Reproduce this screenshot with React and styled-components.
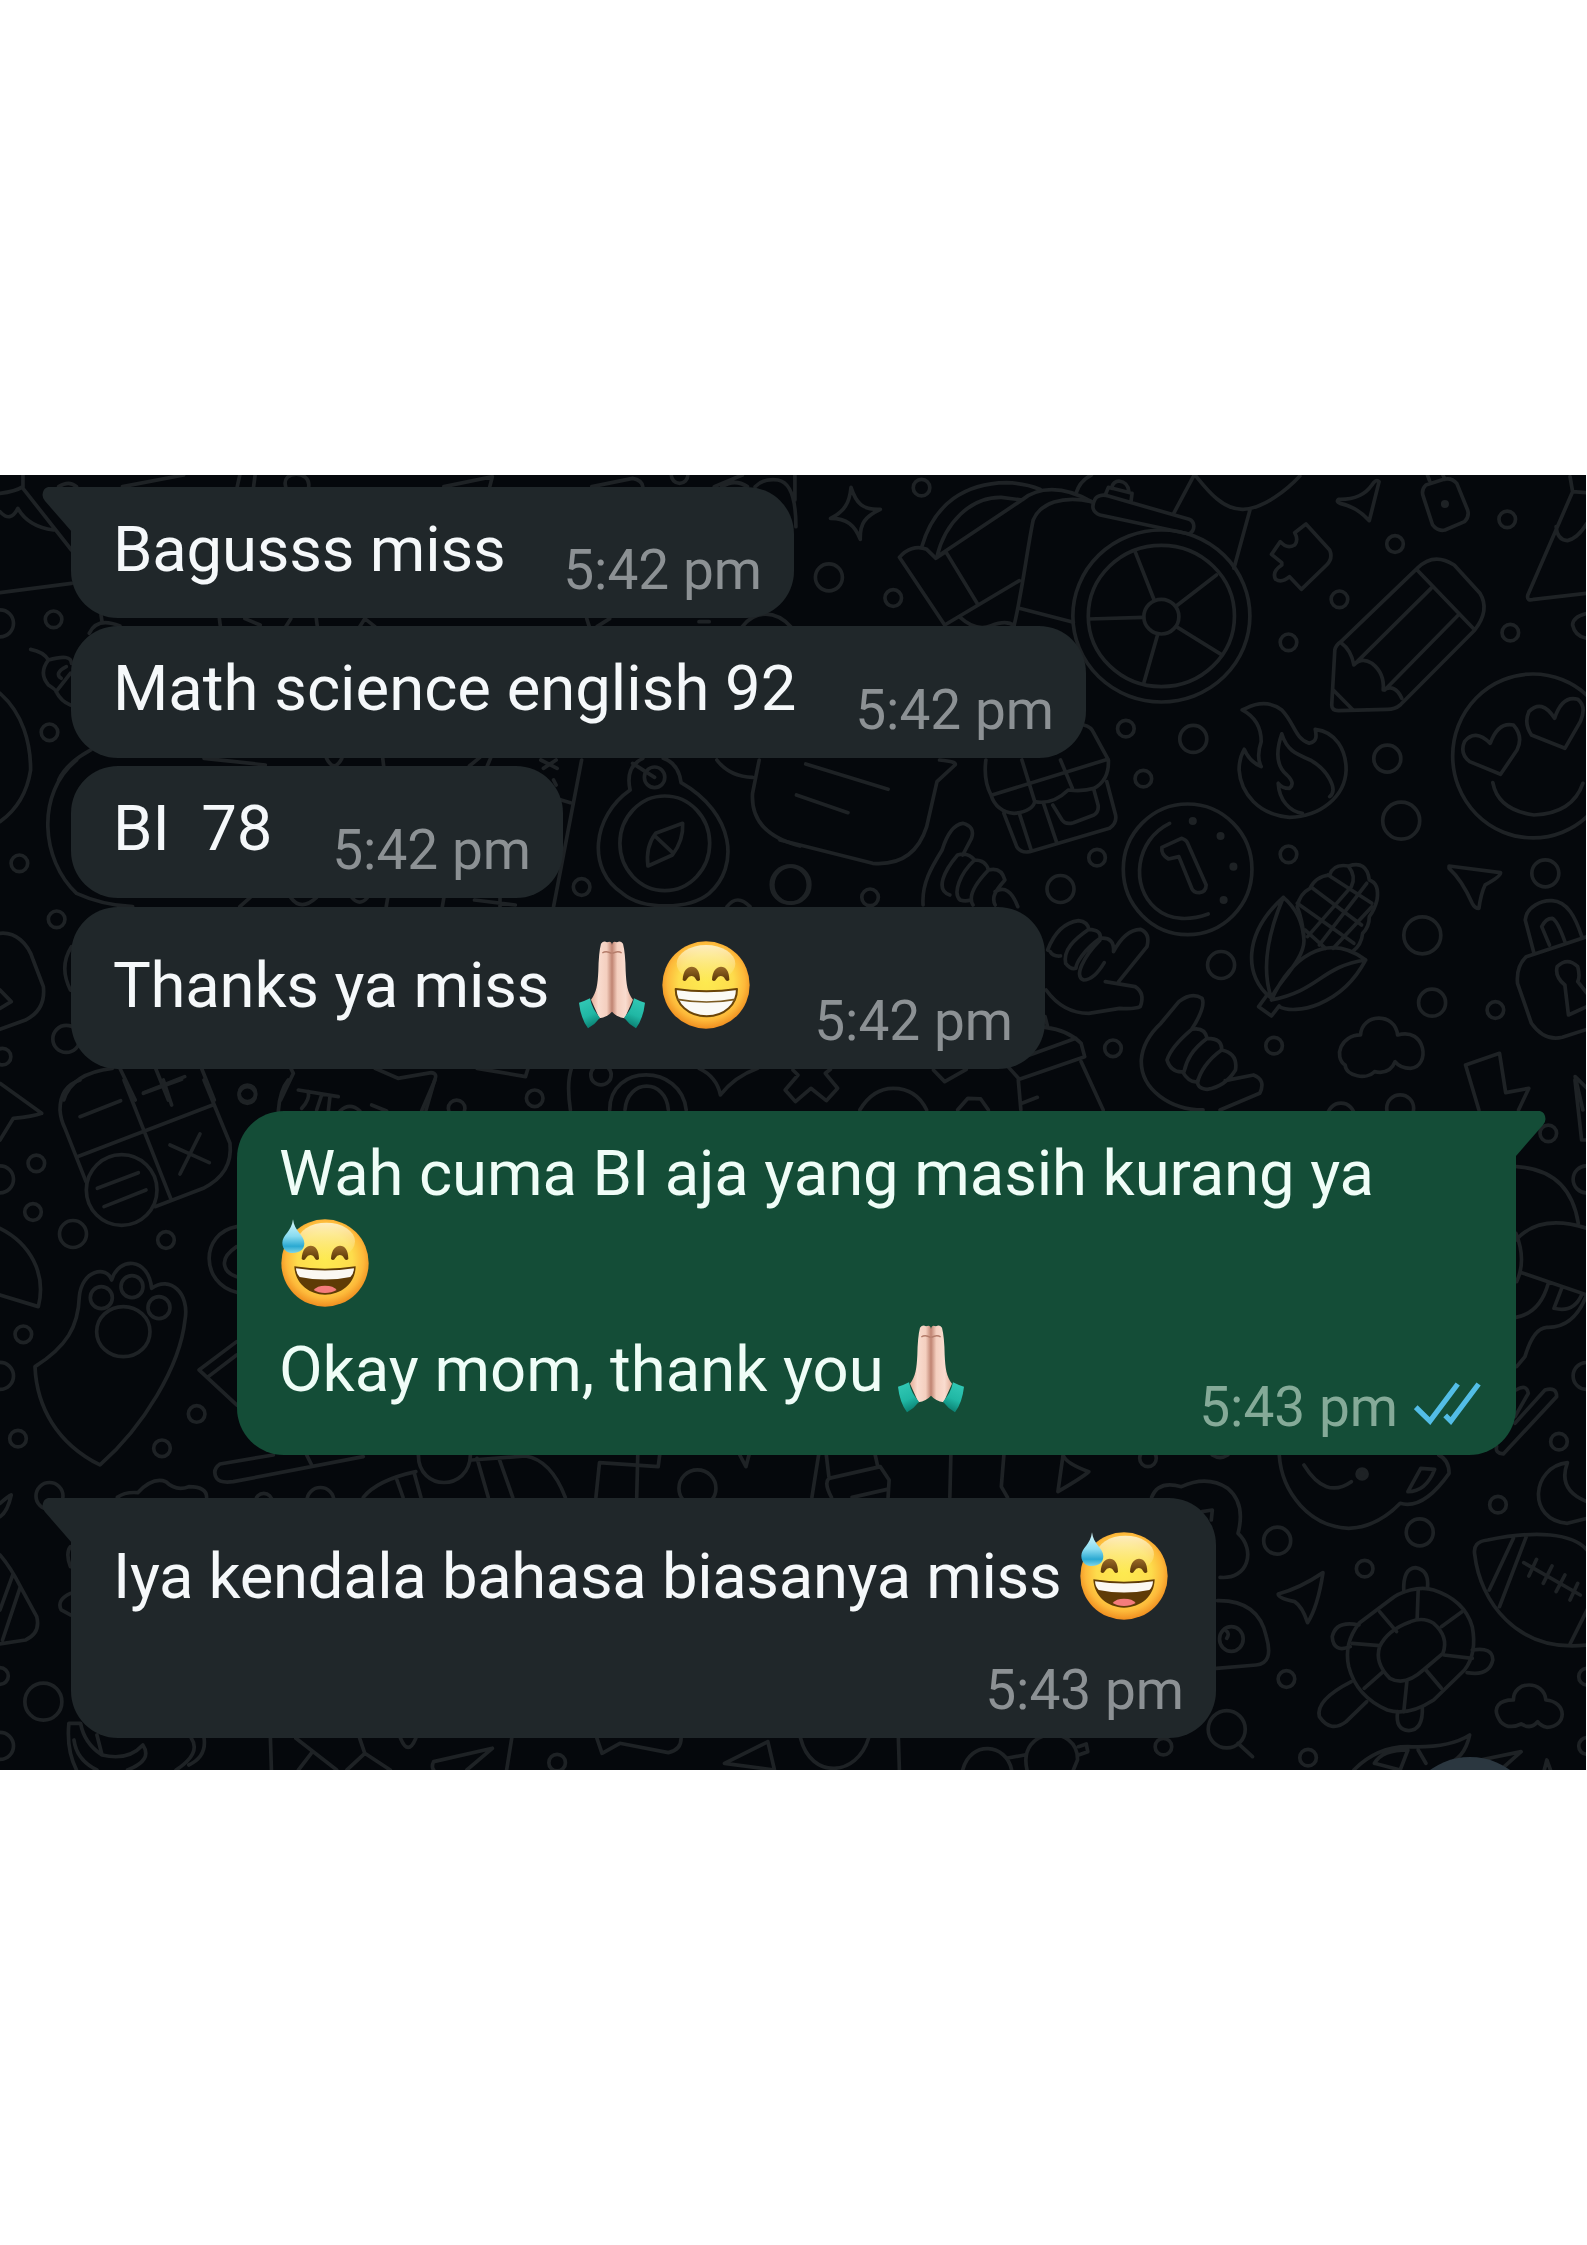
import React from "react";
import styled, { createGlobalStyle } from "styled-components";

const GlobalStyle = createGlobalStyle`
  html, body { margin: 0; padding: 0; background: #ffffff; }
`;

const Page = styled.main`
  box-sizing: border-box;
  width: 1587px;
  height: 2245px;
  padding-top: 475px;
  background: #ffffff;
  overflow: hidden;
  font-family: Roboto, "Liberation Sans", sans-serif;
`;

const ChatPanel = styled.section`
  position: relative;
  display: flex;
  flex-direction: column;
  align-items: flex-start;
  box-sizing: border-box;
  width: 1586px;
  height: 1295px;
  padding: 12px 70px 0 71px;
  background: #05080c;
  overflow: hidden;
`;

const Wallpaper = styled.svg`
  position: absolute;
  inset: 0;
  width: 1586px;
  height: 1295px;
  fill: none;
  stroke: #1e2225;
  stroke-width: 3.7px;
  stroke-linecap: round;
  stroke-linejoin: round;

  * { vector-effect: non-scaling-stroke; }
`;

const Bubble = styled.article`
  position: relative;
  display: grid;
  flex: none;
  box-sizing: border-box;
  width: ${(p) => p.$width}px;
  height: ${(p) => p.$height}px;
  margin-top: ${(p) => p.$gap || 0}px;
  align-self: ${(p) => (p.$sent ? "flex-end" : "flex-start")};
  padding: 25px ${(p) => (p.$sent ? 35 : 32)}px 18px 42px;
  border-radius: 47px;
  border-top-left-radius: ${(p) => (p.$tail && !p.$sent ? 0 : 47)}px;
  border-top-right-radius: ${(p) => (p.$tail && p.$sent ? 0 : 47)}px;
  background: ${(p) => (p.$sent ? "#144d37" : "#20272a")};
  color: ${(p) => (p.$sent ? "#effdf7" : "#f5f8fa")};
`;

const TailShape = styled.svg`
  position: absolute;
  top: 0;
  width: 30px;
  height: 45px;
  ${(p) => (p.$sent ? "left: calc(100% - 0.5px);" : "right: calc(100% - 0.5px); transform: scaleX(-1);")}
  fill: ${(p) => (p.$sent ? "#144d37" : "#20272a")};
`;

const Body = styled.div`
  grid-area: 1 / 1;
  align-self: start;
  display: flex;
  flex-direction: column;
`;

const Line = styled.div`
  display: flex;
  align-items: center;
  height: ${(p) => (p.$tall ? 105.6 : 74.6)}px;
  font-size: 63.4px;
  letter-spacing: ${(p) => p.$tracking || 0}px;
  line-height: 74px;
  white-space: pre;
`;

const EmojiIcon = styled.svg`
  flex: none;
  width: 88px;
  height: 88px;
  margin: 0 3px;
  margin-left: ${(p) => (p.$lead ? 2 : 3)}px;
`;

const Meta = styled.div`
  grid-area: 1 / 1;
  place-self: end;
  display: flex;
  align-items: center;
  gap: 16px;
  color: ${(p) => (p.$sent ? "#85aa98" : "#8c9194")};
`;

const Time = styled.time`
  font-size: 55px;
  line-height: 60px;
  white-space: pre;
`;

const TickIcon = styled.svg`
  width: 67px;
  height: 43px;
  margin-bottom: 8px;
  fill: none;
  stroke: #53bde6;
  stroke-width: 16;
`;

const Defs = () => (
  <defs>
    <radialGradient id="face" cx="0.5" cy="0.46" r="0.54">
      <stop offset="0" stopColor="#fdea50" />
      <stop offset="0.58" stopColor="#fddc4c" />
      <stop offset="0.82" stopColor="#fdb93a" />
      <stop offset="1" stopColor="#ef8e20" />
    </radialGradient>
    <linearGradient id="shine" x1="0" y1="0" x2="0" y2="1">
      <stop offset="0" stopColor="#fdf3cf" stopOpacity="0.9" />
      <stop offset="1" stopColor="#fdf3a0" stopOpacity="0" />
    </linearGradient>
    <linearGradient id="drop" x1="0" y1="0" x2="0" y2="1">
      <stop offset="0" stopColor="#d9f8fb" />
      <stop offset="0.5" stopColor="#8adcf0" />
      <stop offset="0.8" stopColor="#2aa9d2" />
      <stop offset="1" stopColor="#7fd6e6" />
    </linearGradient>
    <linearGradient id="palm" x1="0" y1="0" x2="1" y2="0">
      <stop offset="0" stopColor="#e2ac96" />
      <stop offset="0.35" stopColor="#f9dccf" />
      <stop offset="0.75" stopColor="#f4cfbf" />
      <stop offset="1" stopColor="#c08472" />
    </linearGradient>
    <linearGradient id="cuff" x1="0" y1="0" x2="0.3" y2="1">
      <stop offset="0" stopColor="#35cbb8" />
      <stop offset="0.65" stopColor="#20b7a4" />
      <stop offset="1" stopColor="#0d8778" />
    </linearGradient>
    <linearGradient id="brow" x1="0" y1="0" x2="0" y2="1">
      <stop offset="0" stopColor="#9a6b28" />
      <stop offset="1" stopColor="#5a3606" />
    </linearGradient>
  </defs>
);

const EYE =
  "M368 177 C369 148 383 137 395 137 C409 137 420 149 420 177 Q412 184 407 174 Q403 165 394 165 Q386 165 381 174 Q376 184 368 177Z";

const GrinFace = () => (
  <EmojiIcon viewBox="306 60 264 264" role="img" aria-label="beaming face">
    <Defs />
    <circle cx="438" cy="192" r="131" fill="url(#face)" />
    <ellipse cx="438" cy="128" rx="88" ry="56" fill="url(#shine)" />
    <path d={EYE} fill="url(#brow)" />
    <path d={EYE} fill="url(#brow)" transform="translate(88 0)" />
    <path
      d="M347 204 Q440 218 531 204 C531 250 495 285 440 286 C385 285 347 250 347 204Z"
      fill="#fbfaf5"
      stroke="#6a4408"
      strokeWidth="6"
      strokeLinejoin="round"
    />
    <path d="M352 235 Q440 251 526 235" fill="none" stroke="#7b5a20" strokeWidth="5" />
  </EmojiIcon>
);

const SweatFace = ({ lead }) => (
  <EmojiIcon $lead={lead} viewBox="62 57 264 264" role="img" aria-label="grinning face with sweat">
    <Defs />
    <circle cx="194" cy="189" r="131" fill="url(#face)" />
    <ellipse cx="198" cy="124" rx="86" ry="56" fill="url(#shine)" />
    <path d={EYE} fill="url(#brow)" transform="translate(-244 0)" />
    <path d={EYE} fill="url(#brow)" transform="translate(-156 0)" />
    <path d="M102 199 Q194 213 286 199 C285 250 245 283 194 284 C145 283 104 250 102 199Z" fill="#5f3b06" />
    <path d="M107 205 Q194 218 281 205 Q280 223 270 231 Q194 246 118 231 Q108 222 107 205Z" fill="#fbf8f2" />
    <path d="M160 270 Q170 257 194 257 Q220 257 229 270 Q214 279 194 279 Q174 279 160 270Z" fill="#f47c7c" />
    <path
      d="M98 58 C102 95 132 105 132 130 C132 150 117 159 98 159 C80 159 66 149 66 128 C66 105 94 95 98 58Z"
      fill="url(#drop)"
    />
  </EmojiIcon>
);

const PALM =
  "M123 68 Q131 57 141 64 Q154 58 156 72 L156 272 Q142 288 118 292 L93 236 C110 215 113 190 115 150 Q116 95 123 68Z";
const CUFF = "M57 245 Q75 240 90 232 Q97 266 120 290 Q105 310 84 322 Q62 292 57 245Z";

const Hand = () => (
  <>
    <path d={PALM} fill="url(#palm)" />
    <path d="M127 96 Q138 88 155 97" fill="none" stroke="#b47c6a" strokeWidth="4" />
    <path d={CUFF} fill="url(#cuff)" />
  </>
);

const PrayHands = () => (
  <EmojiIcon viewBox="24 60 264 264" role="img" aria-label="folded hands">
    <Defs />
    <Hand />
    <g transform="translate(312 0) scale(-1 1)">
      <Hand />
    </g>
  </EmojiIcon>
);

const Ticks = () => (
  <TickIcon viewBox="698 905 202 130" aria-label="read">
    <path d="M703 981 L746 1023 L830 911" />
    <path d="M792 1006 L809 1023 L893 911" />
  </TickIcon>
);

const Tail = ({ sent }) => (
  <TailShape $sent={sent} viewBox="0 0 30 45" aria-hidden="true">
    <path d="M0 0 H24 Q29 1 29.5 8 Q29.5 11 27 14 L0 45Z" />
  </TailShape>
);

const Message = ({ width, height, gap, sent, tail, time, children }) => (
  <Bubble $width={width} $height={height} $gap={gap} $sent={sent} $tail={tail}>
    {tail && <Tail sent={sent} />}
    <Body>{children}</Body>
    <Meta $sent={sent}>
      <Time>{time}</Time>
      {sent && <Ticks />}
    </Meta>
  </Bubble>
);

// Each wallpaper tile keeps its own origin and scale: s/m/l are small, medium
// and large rings, "solid" and "spot" are filled specks.
const R = { s: 8.3, m: 13.5, l: 18.5, solid: 2.2, spot: 5 };
const FILLED = ["solid", "spot"];

const TILES = [
  {
    x: 0, y: -15, sx: 0.5102, sy: 0.3333,
    rings: { s: [[1332, 45], [105, 478], [97, 817]], m: [[0, 490]] },
    paths: [
      "M45 45 L45 85 L140 270 M0 100 Q30 95 45 80 M0 155 Q20 190 35 145 Q55 200 105 210 M115 80 Q135 60 150 80",
      "M240 80 L360 45 M465 80 L470 45 M497 80 L500 45 M560 80 C550 30 610 30 605 80",
      "M870 80 L965 50 L960 80 M1160 80 L1240 55 Q1258 60 1260 80 M1400 80 L1455 45 M1415 80 Q1440 55 1465 80",
      "M1480 80 Q1495 55 1525 60 Q1560 70 1560 200 M1558 45 L1558 120 M0 398 L140 370",
      "M60 568 Q85 575 95 600 Q140 580 140 610 M95 600 Q75 640 95 675 Q110 690 110 695 L138 640 M130 620 Q105 640 120 655 M110 695 Q120 725 138 735",
      "M0 700 C45 760 60 850 60 930 Q50 1030 0 1085 M178 870 Q130 910 115 960",
      "M430 476 L432 500 M480 476 L510 495 M560 500 L570 476 M620 476 L622 500 M705 500 L715 476 L735 500 M1150 476 L1155 500 M1170 500 L1195 476 M1370 485 L1390 485 M1455 500 C1480 450 1520 450 1550 500 M198 465 L200 485 M175 520 Q190 470 235 498",
      "M400 895 L520 915 M640 895 Q655 940 670 895 M750 893 L752 918 M940 893 L920 918 M962 893 L955 918",
    ],
  },
  {
    x: 780, y: -15, sx: 0.51467, sy: 0.3333,
    rings: {
      s: [[275, 83], [220, 414], [1195, 252], [1087, 418], [1413, 178], [1419, 518], [988, 547], [672, 806]],
      m: [[95, 352], [803, 837], [1180, 896]],
      solid: [[1292, 132]],
    },
    ellipses: [[741, 468, 172, 258], [741, 468, 142, 212], [741, 470, 34, 52], [1463, 888, 156, 246]],
    paths: [
      "M138 82 C148 130 160 150 195 148 C165 170 155 190 156 238 C145 195 130 175 98 175 C125 155 135 130 138 82Z",
      "M276 258 C300 130 360 70 440 68 C480 70 500 85 505 88 M305 290 C320 190 370 110 430 112 L470 120 M310 285 L470 120 C500 80 550 75 605 125",
      "M320 495 L232 292 C245 268 265 255 285 268 L303 295 L322 275 L385 435 M320 495 L465 362 M455 495 C470 400 480 270 492 180 C505 130 550 105 605 125 M350 472 C370 500 390 510 410 497 C430 485 445 485 455 497 M465 445 L570 487",
      "M690 275 L727 420 M848 345 L770 438 M600 477 L706 472 M734 523 L707 668 M770 500 L857 583",
      "M612 118 C604 140 608 158 622 165 L795 222 C808 210 806 185 795 178 L638 108 C625 102 615 108 612 118Z M632 105 L638 82 L684 100 L682 125 M645 85 C645 55 675 55 678 95",
      "M575 100 C580 75 592 55 605 45 M803 50 L765 160 M808 48 C830 90 860 150 900 148 C940 145 985 90 1010 48 M914 145 L882 325",
      "M1085 118 Q1080 125 1088 130 Q1120 140 1145 182 Q1155 120 1164 65 Q1158 55 1150 75 Q1130 120 1085 118Z",
      "M1290 58 L1255 75 Q1245 90 1250 110 L1268 195 Q1278 215 1292 210 L1330 185 Q1340 170 1336 150 L1315 70 Q1305 52 1290 58Z M1258 45 L1262 62 M1288 45 L1292 58",
      "M1022 192 L1068 270 Q1075 295 1062 315 L1013 388 L990 350 Q975 370 963 358 Q955 335 975 315 L975 308 L955 283 L972 245 Q985 268 1000 255 Q1008 240 1000 218Z",
      "M1238 325 Q1270 275 1310 315 L1360 400 Q1380 450 1350 510 L1205 735 Q1195 748 1180 748 L1085 752 Q1072 752 1072 735 L1078 570 Q1080 555 1090 545Z M1238 330 L1350 510 M1265 385 L1118 610 M1318 465 L1175 690 M1090 548 Q1110 570 1115 615 Q1130 590 1150 610 Q1175 640 1172 690 Q1195 670 1208 715 M1075 690 L1112 748",
      "M1535 50 L1540 95 L1453 405 Q1450 425 1465 418 L1568 400 M1540 95 L1568 98 M1508 200 Q1510 240 1530 242 Q1550 235 1568 190 M1568 460 Q1540 470 1540 495 Q1545 530 1568 535",
      "M1400 943 L1340 905 Q1320 880 1330 845 Q1350 805 1380 850 Q1395 785 1425 795 Q1445 830 1432 870Z M1525 865 L1460 825 Q1445 790 1455 755 Q1480 715 1505 775 Q1520 705 1550 718 Q1568 740 1555 785Z",
      "M905 745 Q945 715 975 750 C1000 790 1000 835 1028 850 C1045 845 1042 825 1040 808 C1080 815 1100 870 1100 930 C1098 1010 1050 1070 990 1072 C930 1065 895 1000 892 930 Q892 895 902 868 Q912 905 935 920 Q925 890 935 845 Q935 780 898 750Z",
      "M975 822 C985 870 1000 880 1030 900 C1065 930 1085 990 1068 1010 M975 822 C962 880 965 920 985 945 Q1002 970 990 985 Q975 985 968 970 C970 1020 990 1055 1015 1060",
      "M590 795 Q605 800 610 820 L638 900",
    ],
  },
  {
    x: 0, y: 285, sx: 0.5102, sy: 0.3333,
    rings: {
      s: [[38, 310], [111, 478], [5, 890], [1140, 381], [485, 1000], [1048, 1015]],
      m: [[130, 837]],
      l: [[1548, 374]],
    },
    ellipses: [[1303, 250, 88, 142], [1283, 52, 20, 31], [1178, 945, 20, 30]],
    paths: [
      "M150 0 C70 100 80 300 150 400 Q200 435 260 440",
      "M1235 90 C1160 170 1150 330 1220 400 C1260 450 1350 450 1390 400 C1450 320 1440 160 1335 68 M1235 90 Q1225 20 1260 -5 M1335 68 Q1330 10 1300 -5 M1240 10 L1283 52",
      "M1338 190 L1285 220 Q1265 260 1270 318 L1318 285 Q1340 240 1338 190Z M1285 230 L1320 280",
      "M1140 0 L1085 440 M1100 120 L1118 128 M1060 0 L1092 25 M1090 0 L1065 25 M1085 60 L1090 75 M1425 440 Q1445 400 1470 440",
      "M1405 0 Q1430 50 1475 52 M1488 0 L1475 100 Q1470 220 1568 258",
      "M490 413 L470 440 M570 413 Q590 455 620 413 M690 413 Q705 440 720 413 M760 413 L757 440 M870 413 L867 440 M980 413 L980 440 M930 420 L1010 435",
      "M0 520 C30 515 55 550 65 600 L85 680 Q90 750 50 780 L0 808 M0 690 L22 725 L0 745 M140 560 Q115 620 138 690",
      "M125 1020 Q140 940 220 925 M235 925 L265 1020 M305 925 L330 1020 M282 998 L362 950 M395 925 L420 1020 M570 925 L575 940 L550 1020",
      "M735 925 L780 955 L845 938 Q858 940 852 960 L835 1050 M935 925 L1030 950 L1035 925 M1120 925 Q1110 970 1118 1050",
      "M1195 1050 C1195 910 1335 910 1345 1050 M1225 1050 C1230 955 1305 955 1310 1050 M1370 925 Q1405 950 1412 1005 Q1440 950 1485 925",
    ],
  },
  {
    x: 780, y: 285, sx: 0.51467, sy: 0.3333,
    rings: {
      s: [[706, 56], [616, 293], [175, 412], [988, 283], [1390, 750], [960, 857], [647, 865]],
      m: [[545, 387], [1487, 340], [857, 615], [1267, 728], [1205, 1045], [1090, 1070]],
      l: [[1207, 182], [22, 374], [1248, 526]],
      solid: [[802, 183], [856, 228], [881, 320], [862, 420]],
    },
    ellipses: [[792, 328, 125, 196]],
    paths: [
      "M1385 68 Q1395 150 1465 165 Q1540 160 1560 70",
      "M400 0 Q395 60 410 105 Q420 155 455 160 Q490 155 495 125 Q530 135 560 90 Q590 95 610 85 Q640 60 638 0 M412 105 L632 0 M470 0 L495 125 M545 0 L568 85 M435 160 L460 260 Q468 280 485 275 L640 205 Q655 190 652 165 L635 65 M465 160 L488 270 M512 130 L537 245 M530 135 L548 180 Q555 195 570 188 L610 165 Q620 155 618 135 L610 90",
      "M310 0 Q345 5 340 15 L305 65 L285 200 Q260 320 180 310 L0 240 M50 12 L210 88 M32 105 L132 158",
      "M757 190 C690 240 680 380 730 445 C760 485 800 480 832 462",
      "M742 262 L780 235 Q790 240 792 250 L828 375 Q828 395 815 398 Q803 398 800 385 L775 290 L755 297 Q740 285 742 262Z",
      "M1018 530 Q1015 480 1005 440 Q1010 400 1030 385 Q1040 350 1068 345 Q1075 310 1105 318 Q1140 300 1145 360 Q1165 370 1160 420 Q1155 450 1145 470 Q1145 500 1132 520 Q1130 555 1112 575",
      "M1035 385 L1130 495 M1065 345 L1150 430 M1005 430 L1115 550 M1020 510 L1060 565 M1105 320 Q1120 350 1110 380 L1025 530 M1140 370 L1048 555 M1150 440 L1075 565",
      "M978 412 C900 520 900 650 955 715 C960 680 1020 600 1018 540 Q1015 460 978 412Z M978 412 C940 550 940 650 955 715 M955 720 C990 600 1060 510 1138 600 C1090 740 1000 765 970 740 M955 720 C1050 690 1050 620 1138 600 M945 708 L930 740 L955 768 L970 738",
      "M1300 318 L1400 338 Q1402 348 1370 375 Q1362 400 1358 445 Q1350 445 1345 430 Q1325 360 1300 325Z",
      "M1465 580 L1448 480 C1450 440 1480 420 1500 422 C1530 425 1545 470 1558 530 M1495 555 L1480 500 Q1488 475 1500 475 Q1510 480 1525 545 M1568 530 L1450 590 Q1430 620 1433 670 L1460 790 Q1485 845 1520 832 L1568 808 M1525 675 Q1505 650 1510 620 Q1530 590 1550 620 Q1555 650 1550 665 L1568 700 M1525 675 L1532 765 L1568 740",
      "M1128 825 C1130 760 1195 755 1200 825 C1255 800 1265 920 1225 925 Q1205 925 1195 905 Q1185 945 1155 935 C1140 960 1100 950 1098 915 C1075 890 1090 825 1128 825Z",
      "M1358 1050 L1332 915 L1398 880 L1410 998 L1455 985 L1435 1050 M1560 1050 L1545 950 L1568 985",
      "M278 435 C275 370 295 320 315 270 Q330 195 355 190 Q380 200 372 235 L355 285 M330 405 C300 390 320 330 345 285 Q365 275 378 300 M378 300 C350 340 335 400 350 420 Q360 425 370 420 M378 300 Q400 300 405 330 C380 370 365 410 375 435 M405 330 Q430 320 437 360 C420 390 410 410 418 435 M418 395 Q445 370 462 440",
      "M520 570 Q540 490 580 482 Q598 485 600 508 C570 540 550 570 555 610 M525 575 Q530 590 545 588 M600 508 Q625 510 622 535 C590 570 575 610 575 625 Q565 630 555 610 M622 535 Q650 530 648 575 Q670 510 700 508 Q720 520 713 560 L658 665 M622 540 C590 590 570 650 590 660 Q610 660 630 608 M632 665 L690 680 Q710 700 700 740 Q690 748 660 745 L600 760 Q550 760 517 690",
      "M822 1050 C760 1050 700 990 702 900 Q705 840 740 790 L775 725 Q800 695 820 715 Q828 740 800 808 Q825 800 830 835 C800 870 790 900 785 935 Q760 940 752 900 Q760 860 800 808 M830 835 Q860 835 858 870 C830 900 815 940 812 965 Q795 970 782 935 M858 870 Q890 880 885 930 Q865 980 830 988 Q808 985 812 960 M865 962 L920 945 Q945 960 932 1000 L855 1050",
      "M515 802 Q560 810 585 850 L592 890 L465 958 L443 920 M485 885 L575 835 M585 905 L628 1050 M463 960 L468 1050 M470 1030 L500 1012 M515 770 L520 800",
      "M25 930 L35 945 L10 990 L30 1025 L60 985 L90 1022 L112 985 L88 940 L98 928 M155 1050 Q180 985 220 985 Q265 985 285 1050 M345 1050 L365 1015 L390 1017 L405 1050 M298 930 L320 965 L362 928",
    ],
  },
  {
    x: 0, y: 605, sx: 0.3333, sy: 0.3333,
    rings: {
      s: [[742, 45], [109, 250], [99, 396], [498, 480], [70, 763], [590, 1002], [54, 1076], [486, 1105], [1370, 85]],
      m: [[0, 298], [219, 462], [0, 888]],
    },
    ellipses: [[365, 330, 106, 106], [304, 653, 33, 33], [396, 620, 33, 33], [477, 683, 33, 33], [370, 755, 80, 75]],
    paths: [
      "M240 0 Q180 20 180 90 Q182 120 195 145 L258 305 M612 0 L690 190 Q700 280 610 325 L465 380 M372 0 L512 355 M232 230 L638 75 M240 110 L362 62 M430 40 L545 -2 M490 0 L515 75 M510 195 L628 248 M600 162 L540 282 M292 325 L415 278 M312 380 L438 330",
      "M0 10 L125 100 Q100 110 40 115 L0 180 M0 445 C90 490 140 580 115 680 L0 645",
      "M710 440 C600 460 600 610 710 637 M710 500 Q665 530 675 560 Q680 580 710 590 M835 93 Q840 30 865 0",
      "M895 30 L1015 50 M925 35 Q930 60 905 85 M965 45 L950 90 M990 50 L985 93 M1020 93 Q1050 65 1080 93 M1115 75 L1160 93 M1265 93 L1305 0",
      "M105 860 C200 800 235 740 238 650 C245 570 320 555 335 600 C355 530 445 530 455 625 C510 585 570 640 555 720 C540 860 430 1040 300 1155 C170 1090 110 980 105 860Z",
      "M710 785 L597 870 L710 975 M625 890 L710 825",
      "M820 1125 L660 1152 Q635 1170 650 1195 Q660 1210 700 1205 L1090 1130 M920 1125 L935 1155",
    ],
  },
  {
    x: 1180, y: 605, sx: 0.3333, sy: 0.3333,
    rings: { s: [[1105, 160], [1137, 1085]], m: [[1220, 298], [1220, 888]] },
    paths: [
      "M1185 0 L1205 180 L1221 180 M1010 260 Q1170 270 1195 430 M1008 480 Q1080 400 1221 445 M1008 460 Q1040 540 1010 605 M1025 578 L1221 645 M1105 610 Q1080 700 1008 712 M1145 625 L1122 685 Q1180 700 1205 645",
      "M1218 650 Q1180 745 1100 742 Q1060 745 1035 830 L1010 860 M1008 930 Q1040 910 1045 940 L1005 1010 M950 1100 Q945 1120 970 1122 L1130 950 Q1130 920 1095 930 L1005 1030",
    ],
  },
  {
    x: 0, y: 965, sx: 0.5102, sy: 0.3333,
    rings: { s: [[517, 185], [0, 708], [1092, 968]], m: [[97, 168], [628, 183], [0, 918]], l: [[1367, 145], [85, 785]] },
    paths: [
      "M820 45 C820 155 920 155 922 45 M712 172 Q740 120 815 95 M778 120 L790 172 M812 100 L825 172 M925 60 L1030 48 Q1080 60 1108 172 M935 55 L957 172 M978 55 L1005 172",
      "M1168 172 L1175 68 L1290 80 L1293 45 M1250 45 L1248 172 M1450 45 L1462 80 L1468 45 M230 172 Q245 155 270 158 Q300 110 325 125 Q345 155 370 140 Q405 140 405 172",
      "M0 190 Q15 170 22 165 Q15 215 0 230 M0 345 Q20 380 40 440 L72 530 Q80 580 50 600 L0 612 M25 405 L0 510 M40 440 L5 600 M138 320 Q128 340 138 380 M138 460 Q110 480 120 510 L138 525",
      "M150 990 Q130 930 135 850 L158 850 Q165 910 200 945 C240 960 265 940 280 915 Q300 960 250 990 M145 900 Q150 960 190 990 M190 885 L200 945 M375 895 Q395 940 345 990 M400 895 Q405 950 370 975",
      "M530 895 L532 990 M580 895 L660 990 M610 940 L585 990 M705 895 L715 940 L680 990 M715 940 L765 990 M785 895 Q800 950 815 895 M965 925 L850 965 Q845 980 850 990 M965 925 L915 990 M1003 895 L993 990",
      "M1170 895 L1180 940 L1215 910 L1310 938 Q1335 930 1335 895 M1505 905 L1420 970 L1518 990Z",
    ],
  },
  {
    x: 780, y: 965, sx: 0.51467, sy: 0.3333,
    rings: {
      s: [[715, 55], [1395, 194], [1136, 386], [984, 717], [745, 920], [1026, 953], [1568, 710], [1568, 918]],
      m: [[1243, 277], [966, 302]],
      spot: [[1131, 102]],
    },
    ellipses: [[877, 597, 23, 37], [868, 868, 36, 56]],
    paths: [
      "M1568 235 L1530 250 C1450 240 1460 80 1530 68 Q1510 150 1568 185",
      "M970 45 C975 160 1030 260 1105 265 Q1160 262 1205 190 Q1250 210 1300 100 Q1300 60 1280 45 M1245 85 L1272 88 Q1255 155 1220 155Z M1018 75 Q1060 180 1110 125",
      "M722 172 Q735 120 780 140 Q830 105 870 145 Q905 190 890 280 C925 330 910 420 855 412 M820 215 L840 210 L838 240",
      "M850 482 Q930 480 945 590 Q960 670 925 675 L848 685 M865 570 Q875 580 868 595 M890 910 L918 950",
      "M1055 398 Q1010 445 968 462 Q968 475 1000 485 Q1015 500 1025 548 Q1045 500 1055 398Z",
      "M1225 450 Q1250 440 1270 450 Q1330 480 1345 560 Q1355 640 1330 690 L1270 780 Q1220 830 1180 810 Q1120 770 1105 680 Q1095 610 1125 550 L1185 480 Q1200 460 1225 450Z M1225 545 Q1250 530 1270 550 Q1300 590 1288 640 L1250 690 Q1215 740 1185 715 Q1155 670 1165 620 Q1180 570 1225 545Z",
      "M1240 450 L1238 535 M1165 515 L1198 575 M1325 515 L1285 560 M1112 610 L1165 617 M1290 645 L1345 655 M1255 690 L1285 745 M1218 725 L1212 815 M1172 695 L1135 745",
      "M1212 455 Q1210 385 1235 383 Q1262 390 1258 445 M1125 555 Q1080 540 1073 590 Q1075 640 1108 620 M1345 630 Q1385 620 1385 660 Q1378 710 1335 698 M1110 725 Q1040 780 1048 830 Q1070 880 1100 845 L1140 785 M1200 815 Q1195 870 1222 872 Q1250 870 1248 800",
      "M1568 330 C1540 280 1470 270 1375 300 Q1345 305 1350 345 C1360 480 1430 640 1568 615 M1425 295 L1378 450 M1450 290 L1398 500 M1568 510 L1535 612 M1445 368 L1555 465 M1470 358 L1455 408 M1500 378 L1483 430 M1525 405 L1508 455 M1550 430 L1535 480",
      "M1425 780 C1425 720 1485 720 1488 780 C1530 785 1530 860 1490 862 Q1478 858 1472 845 Q1460 870 1440 852 Q1415 870 1400 845 C1380 800 1400 780 1425 780Z",
      "M1115 990 Q1160 920 1220 920 Q1300 925 1340 885 Q1330 960 1290 975 M1400 990 L1440 935 L1330 970 M1155 970 Q1170 930 1220 930 L1205 990 M1155 970 L1205 990 M1240 930 L1255 970 M1485 990 L1490 960 L1497 990",
      "M40 895 C60 1020 150 1010 172 895 M230 895 L232 990 M355 990 C370 900 440 910 450 990 M480 990 C460 860 580 850 578 960 L570 990 M580 920 L595 912 L598 935 L580 945 M440 955 L475 945",
      "M62 172 L75 45 M90 45 L95 110 M100 172 Q85 130 95 115 L195 80 L212 120 L210 172 M190 80 L185 45 M140 172 L208 148 M330 172 L332 45 M435 45 L430 140 L442 172 M550 45 Q555 70 600 95 Q590 110 540 155Z M840 45 Q855 60 870 45",
    ],
  },
];

const Tile = ({ tile }) => (
  <g transform={`translate(${tile.x} ${tile.y}) scale(${tile.sx} ${tile.sy})`}>
    {tile.paths.map((d) => (
      <path key={d} d={d} />
    ))}
    {(tile.ellipses || []).map(([cx, cy, rx, ry]) => (
      <ellipse key={`${cx}-${cy}-${rx}`} cx={cx} cy={cy} rx={rx} ry={ry} />
    ))}
    {Object.entries(tile.rings || {}).flatMap(([size, points]) =>
      points.map(([cx, cy]) => (
        <ellipse
          key={`${size}-${cx}-${cy}`}
          cx={cx}
          cy={cy}
          rx={R[size] / tile.sx}
          ry={R[size] / tile.sy}
          fill={FILLED.includes(size) ? "#1e2225" : "none"}
        />
      ))
    )}
  </g>
);

export default function App() {
  return (
    <Page>
      <GlobalStyle />
      <ChatPanel>
        <Wallpaper viewBox="0 0 1586 1295" aria-hidden="true">
          {TILES.map((tile, i) => (
            <Tile key={i} tile={tile} />
          ))}
          <circle cx="1470" cy="1350" r="68" fill="#2b3740" stroke="none" />
        </Wallpaper>
        <Message width={723} height={131} tail time="5:42 pm">
          <Line $tracking={-0.2}>Bagusss miss</Line>
        </Message>
        <Message width={1015} height={132} gap={8} time="5:42 pm">
          <Line>Math science english 92</Line>
        </Message>
        <Message width={492} height={132} gap={8} time="5:42 pm">
          <Line>{"BI  78"}</Line>
        </Message>
        <Message width={974} height={162} gap={9} time="5:42 pm">
          <Line $tall $tracking={-0.2}>
            <span>{"Thanks ya miss "}</span>
            <PrayHands />
            <GrinFace />
          </Line>
        </Message>
        <Message width={1279} height={344} gap={42} sent tail time="5:43 pm">
          <Line $tracking={-0.08}>Wah cuma BI aja yang masih kurang ya</Line>
          <Line $tall>
            <SweatFace lead />
          </Line>
          <Line $tall>
            <span>Okay mom, thank you</span>
            <PrayHands />
          </Line>
        </Message>
        <Message width={1145} height={240} gap={43} tail time="5:43 pm">
          <Line $tall $tracking={-0.34}>
            <span>{"Iya kendala bahasa biasanya miss "}</span>
            <SweatFace />
          </Line>
        </Message>
      </ChatPanel>
    </Page>
  );
}
